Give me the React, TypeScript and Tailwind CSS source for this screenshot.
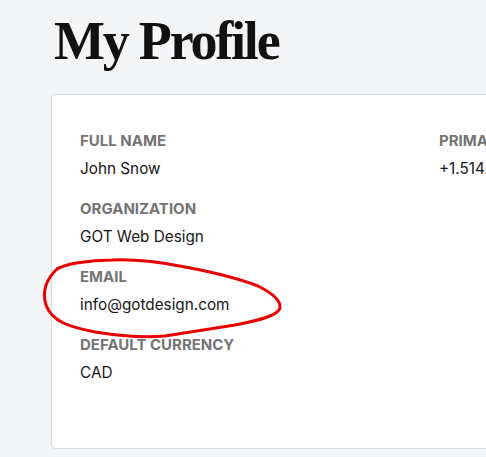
import React from "react";

interface Field {
  label: string;
  value: string;
}

const leftFields: Field[] = [
  { label: "Full Name", value: "John Snow" },
  { label: "Organization", value: "GOT Web Design" },
  { label: "Email", value: "info@gotdesign.com" },
  { label: "Default Currency", value: "CAD" },
];

const rightFields: Field[] = [{ label: "Primary Phone", value: "+1.514.555.0199" }];

function FieldList({ fields }: { fields: Field[] }) {
  return (
    <div className="flex flex-col gap-[18px]">
      {fields.map((f) => (
        <div key={f.label}>
          <div className="text-[15px] leading-5 font-bold uppercase text-[#747474] whitespace-nowrap">
            {f.label}
          </div>
          <div className="mt-[6px] text-[15.3px] leading-6 text-[#161618] whitespace-nowrap">
            {f.value}
          </div>
        </div>
      ))}
    </div>
  );
}

export default function App() {
  return (
    <div
      className="relative w-[486px] h-[457px] overflow-hidden bg-[#f4f5f7] pl-[51px] pt-[14px]"
      style={{ fontFamily: "Inter, 'Liberation Sans', sans-serif" }}
    >
      <h1
        className="pl-[3px] text-[54px] leading-none font-bold tracking-[-2.2px] text-[#111111]"
        style={{ fontFamily: "'Liberation Serif', 'DejaVu Serif', serif" }}
      >
        My Profile
      </h1>

      {/* Profile card */}
      <div className="mt-[26px] w-[640px] h-[355px] bg-white border border-[#d9dde1] rounded-[4px] pl-[28px] pt-[36px]">
        <div className="grid grid-cols-[359px_1fr]">
          <FieldList fields={leftFields} />
          <FieldList fields={rightFields} />
        </div>
      </div>

      {/* hand-drawn annotation */}
      <svg
        className="absolute inset-0 pointer-events-none"
        width="486"
        height="457"
        viewBox="0 0 486 457"
      >
        <path
          d="M56 270 C 62 264, 90 260, 112 260 C 135 259, 160 262, 185 267 C 212 272, 240 279, 258 286 C 272 293, 281 300, 280 308 C 278 315, 262 320, 235 325 C 210 329, 190 332, 165 336 C 145 338, 120 336, 95 332 C 70 327, 52 322, 46 305 C 42 292, 45 280, 58 268"
          fill="none"
          stroke="#e80000"
          strokeWidth="3"
          strokeLinecap="round"
        />
      </svg>
    </div>
  );
}
